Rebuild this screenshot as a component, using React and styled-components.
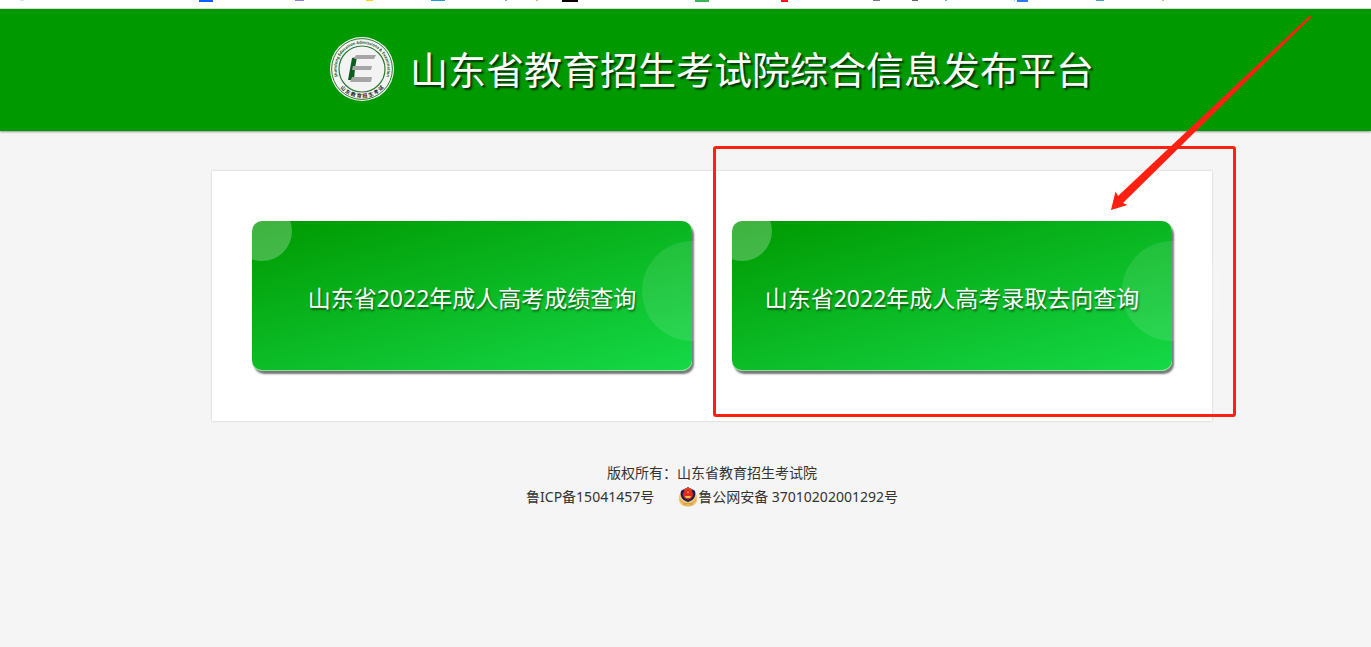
import React from "react";
import styled, { createGlobalStyle } from "styled-components";

const COLORS = {
  primary: "#009900",
  primaryLight: "#15d948",
  page: "#f5f5f5",
  text: "#333",
  mark: "#ff2012",
};

const GlobalStyle = createGlobalStyle`
  *, *::before, *::after {
    box-sizing: border-box;
  }

  body {
    margin: 0;
    background: ${COLORS.page};
    color: ${COLORS.text};
    font-family: "Noto Sans", "Noto Sans CJK SC", sans-serif;
    font-size: 14px;
    line-height: 24px;
  }
`;

/* bottoms of the bookmark icons: x, width, height, color */
const BOOKMARKS = [
  [20, 4, 1, "#c4ecf4"],
  [199, 14, 2, "#0a63ff"],
  [295, 9, 1, "#8484e0"],
  [366, 7, 1, "#ffd400"],
  [431, 14, 1, "#1a9fdc"],
  [505, 2, 1, "#6fb0dc"],
  [536, 2, 1, "#dcb48c"],
  [562, 16, 2, "#0c0004"],
  [695, 14, 2, "#3cb458"],
  [781, 7, 2, "#ff1020"],
  [873, 7, 1, "#707a90"],
  [912, 6, 1, "#666"],
  [945, 2, 1, "#6fb0dc"],
  [1014, 1, 1, "#8fdca0"],
  [1017, 11, 2, "#2a7bff"],
  [1096, 8, 1, "#4c9cc8"],
  [1162, 2, 1, "#dcb48c"],
];

const Logo = () => (
  <LogoImage viewBox="0 0 64 64" aria-hidden="true">
    <defs>
      <path id="arc-top" d="M 8.2 41 A 25.4 25.4 0 1 1 55.8 41" />
      <path id="arc-bottom" d="M 4.5 40 A 28.6 28.6 0 0 0 59.5 40" />
    </defs>
    <circle cx="32" cy="32" r="32" fill="#f3f5f3" />
    <circle
      cx="32"
      cy="32"
      r="30.4"
      fill="none"
      stroke="#2c7a34"
      strokeWidth="1"
    />
    <circle
      cx="32"
      cy="32"
      r="23"
      fill="#f3f3f3"
      stroke="#2c7a34"
      strokeWidth="1.2"
    />
    <text fontSize="4" fontWeight="700" fill="#24572a">
      <textPath href="#arc-top" startOffset="50%" textAnchor="middle">
        Shandong Education Admissions &amp; Examination
      </textPath>
    </text>
    <text fontSize="5" fontWeight="700" fill="#222">
      <textPath href="#arc-bottom" startOffset="50%" textAnchor="middle">
        山 东 教 育 招 生 考 试
      </textPath>
    </text>
    <path d="M22 21 L27 20 L25 31 L24 43 L18 43 L20 32 Z" fill="#0f5c20" />
    <path
      d="M26 18 H46 L44 22 H24 Z M23 29 H42 L41 33 H22 Z M22 40 H42 L41 45 H20 Z"
      fill="#a6a6a6"
    />
  </LogoImage>
);

const PoliceBadge = () => (
  <BadgeImage viewBox="0 0 20 20" aria-hidden="true">
    <path
      d="M3 5 C0 9 0 16 4 18 C7 20 13 20 16 18 C20 16 20 9 17 5 Z"
      fill="#f0c573"
    />
    <path
      d="M2 13 Q6 18 10 16 Q14 18 18 13 M5 17 Q10 20 15 17"
      fill="none"
      stroke="#d09339"
      strokeWidth="0.8"
    />
    <path
      d="M10 0 C12 2 15 2 17 4 C18 8 17 13 10 15 C3 13 2 8 3 4 C5 2 8 2 10 0 Z"
      fill="#1b1c55"
    />
    <path d="M5 3 Q10 -2 15 3 L13 4 H7 Z" fill="#d8452a" />
    <circle cx="10" cy="7.5" r="5" fill="#df2a20" />
    <path d="M10 4 L11 6 H9 Z M7 9 H13 L12 11 H8 Z" fill="#f6bd43" />
  </BadgeImage>
);

const Highlight = () => (
  <>
    <MarkFrame />
    <MarkArrow viewBox="0 0 202 196" aria-hidden="true">
      <path d="M200 0.5 L201.5 2 L13 188 L17.5 190 L1 195 L5.5 176.5 L8 181 Z" />
    </MarkArrow>
  </>
);

const QueryCard = ({ children, marked }) => (
  <CardSlot>
    <Card href="#">{children}</Card>
    {marked && <Highlight />}
  </CardSlot>
);

const App = () => (
  <>
    <GlobalStyle />
    <BookmarkStrip>
      <BookmarkIcons aria-hidden="true">
        {BOOKMARKS.map(([x, width, height, fill]) => (
          <rect key={x} x={x} width={width} height={height} fill={fill} />
        ))}
      </BookmarkIcons>
    </BookmarkStrip>
    <Header>
      <Logo />
      <Title>山东省教育招生考试院综合信息发布平台</Title>
    </Header>
    <Main>
      <Panel>
        <QueryCard>山东省2022年成人高考成绩查询</QueryCard>
        <QueryCard marked>山东省2022年成人高考录取去向查询</QueryCard>
      </Panel>
    </Main>
    <Footer>
      <div>版权所有：山东省教育招生考试院</div>
      <Records>
        <FooterLink href="#">鲁ICP备15041457号</FooterLink>
        <FooterLink href="#">
          <PoliceBadge />
          鲁公网安备 37010202001292号
        </FooterLink>
      </Records>
    </Footer>
  </>
);

const BookmarkStrip = styled.div`
  height: 9px;
  background: #fff;
  border-bottom: 1px solid #e2e2e2;
`;

const BookmarkIcons = styled.svg`
  display: block;
  width: 100%;
  height: 8px;
`;

/* the page is centred a little right of the window */
const Section = styled.div`
  padding-left: 53px;
`;

const Header = styled(Section).attrs({ as: "header" })`
  display: flex;
  justify-content: center;
  align-items: center;
  gap: 16px;
  height: 122px;
  padding-bottom: 2px;
  background: ${COLORS.primary};
  box-shadow: 0 1px 2px rgba(0, 0, 0, 0.4);
`;

const LogoImage = styled.svg`
  flex: none;
  width: 64px;
  height: 64px;
`;

const Title = styled.h1`
  margin: 0;
  color: #fff;
  font-size: 38px;
  font-weight: 400;
  line-height: 56px;
  text-shadow: 2px 2px 2px rgba(0, 0, 0, 0.7);
`;

const Main = styled(Section).attrs({ as: "main" })`
  display: flex;
  justify-content: center;
  margin-top: 40px;
`;

const Panel = styled.div`
  display: grid;
  grid-template-columns: 1fr 1fr;
  gap: 40px;
  width: 100%;
  max-width: 1000px;
  padding: 50px 40px;
  background: #fff;
  box-shadow: 0 0 2px rgba(0, 0, 0, 0.2);
`;

const CardSlot = styled.div`
  position: relative;
`;

const Card = styled.a`
  position: relative;
  display: flex;
  justify-content: center;
  align-items: center;
  height: 150px;
  padding-top: 3px;
  border-radius: 10px;
  background: linear-gradient(
    165deg,
    ${COLORS.primary},
    ${COLORS.primaryLight}
  );
  box-shadow: 2px 3px 2px #777, inset 0 -1px 0 rgba(255, 255, 255, 0.5);
  color: #fff;
  font-size: 23px;
  text-decoration: none;
  text-shadow: 1px 2px 2px rgba(0, 0, 0, 0.5);

  &::before,
  &::after {
    content: "";
    position: absolute;
    border-radius: 50%;
  }

  &::before {
    top: -20px;
    left: -20px;
    width: 60px;
    height: 60px;
    background: rgba(255, 255, 255, 0.25);
  }

  &::after {
    top: 20px;
    right: -50px;
    width: 100px;
    height: 100px;
    background: rgba(255, 255, 255, 0.1);
  }
`;

const MarkFrame = styled.div`
  position: absolute;
  inset: -75px -64px -46px -19px;
  border: 3px solid ${COLORS.mark};
  border-radius: 3px;
  pointer-events: none;
`;

const MarkArrow = styled.svg`
  position: absolute;
  top: -206px;
  right: -140px;
  width: 202px;
  height: 196px;
  fill: ${COLORS.mark};
  pointer-events: none;
`;

const Footer = styled(Section).attrs({ as: "footer" })`
  margin-top: 40px;
  text-align: center;
`;

const Records = styled.div`
  display: flex;
  justify-content: center;
  gap: 24px;
`;

const FooterLink = styled.a`
  display: flex;
  align-items: center;
  color: inherit;
  text-decoration: none;
`;

const BadgeImage = styled.svg`
  width: 20px;
  height: 20px;
`;

export default App;
